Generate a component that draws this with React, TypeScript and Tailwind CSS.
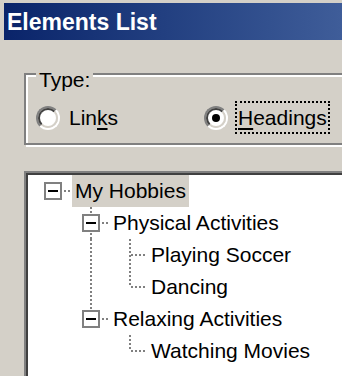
import React from "react";

// tree connector cell kinds
type Cell = "blank" | "pipe" | "tee" | "ell" | "boxRoot" | "boxTee" | "boxEll";

interface Row {
  cells: Cell[];
  label: string;
  selected?: boolean;
}

const rows: Row[] = [
  { cells: ["boxRoot"], label: "My Hobbies", selected: true },
  { cells: ["blank", "boxTee"], label: "Physical Activities" },
  { cells: ["blank", "pipe", "tee"], label: "Playing Soccer" },
  { cells: ["blank", "pipe", "ell"], label: "Dancing" },
  { cells: ["blank", "boxEll"], label: "Relaxing Activities" },
  { cells: ["blank", "blank", "ell"], label: "Watching Movies" },
];

const dots = { stroke: "#808080", strokeWidth: 2, strokeDasharray: "2 2" };

function Connector({ kind }: { kind: Cell }) {
  const hasBox = kind === "boxRoot" || kind === "boxTee" || kind === "boxEll";
  return (
    <svg width="38" height="32" className="shrink-0">
      {kind === "pipe" && <line x1="19" y1="0" x2="19" y2="32" {...dots} />}
      {kind === "tee" && (
        <>
          <line x1="20" y1="0" x2="20" y2="32" {...dots} />
          <line x1="21" y1="16" x2="37" y2="16" {...dots} />
        </>
      )}
      {kind === "ell" && (
        <>
          <line x1="20" y1="0" x2="20" y2="16" {...dots} />
          <line x1="21" y1="16" x2="37" y2="16" {...dots} />
        </>
      )}
      {(kind === "boxTee" || kind === "boxEll") && <line x1="19" y1="0" x2="19" y2="7" {...dots} />}
      {kind === "boxTee" && <line x1="19" y1="26" x2="19" y2="32" {...dots} />}
      {hasBox && (
        <>
          <line x1="30" y1="16" x2="38" y2="16" {...dots} />
          <rect x="11" y="8" width="16" height="16" fill="white" stroke="#808080" strokeWidth="2" />
          <rect x="14" y="15" width="10" height="2" fill="black" />
        </>
      )}
    </svg>
  );
}

function Radio({ checked }: { checked?: boolean }) {
  return (
    <span className="flex h-6 w-6 shrink-0 items-center justify-center rounded-full border-2 border-t-[#808080] border-l-[#808080] border-b-white border-r-white">
      <span className="flex h-5 w-5 items-center justify-center rounded-full border-2 border-t-[#404040] border-l-[#404040] border-b-[#d4d0c8] border-r-[#d4d0c8] bg-white">
        {checked && <span className="h-2 w-2 rounded-full bg-black" />}
      </span>
    </span>
  );
}

export default function App() {
  return (
    <div className="h-[376px] w-[342px] overflow-hidden bg-[#d4d0c8] pt-[3px] font-['Liberation_Sans',Arial,sans-serif] text-black">
      {/* caption bar */}
      <div className="ml-[4px] flex h-[37px] items-center bg-gradient-to-r from-[#0a246a] to-[#3f5d99] pl-[3px] pt-[2px] text-[23px] font-bold text-white">
        Elements List
      </div>

      {/* Type group */}
      <div className="relative ml-[24px] mt-[33px] h-[72px] w-[340px] border-2 border-[#808080] shadow-[inset_2px_2px_0_white,2px_2px_0_white]">
        <span className="absolute left-[10px] top-[-7px] bg-[#d4d0c8] px-[3px] text-[21px] leading-6">Type:</span>
        <div className="flex items-center pt-[26px]">
          <label className="ml-[10px] flex w-[168px] items-center gap-[9px] text-[21px] leading-6">
            <Radio />
            <span>
              Lin<u className="decoration-2 underline-offset-[3px]">k</u>s
            </span>
          </label>
          <label className="flex items-center gap-[7px] text-[21px] leading-6">
            <Radio checked />
            <span className="flex h-[33px] items-center border-2 border-dotted border-black px-px">
              <span>
                <u className="decoration-2 underline-offset-[3px]">H</u>eadings
              </span>
            </span>
          </label>
        </div>
      </div>

      {/* tree view */}
      <div className="ml-[24px] mt-[26px] h-[220px] w-[330px] border-l-2 border-t-2 border-[#808080]">
        <div className="h-full border-l-2 border-t-2 border-[#404040] bg-white pl-[6px]">
          {rows.map((row) => (
            <div key={row.label} className="flex h-8 items-center">
              {row.cells.map((c, i) => (
                <Connector key={i} kind={c} />
              ))}
              <span
                className={`h-8 whitespace-nowrap px-[3px] text-[21px] leading-8 ${row.selected ? "bg-[#d4d0c8]" : ""}`}
              >
                {row.label}
              </span>
            </div>
          ))}
        </div>
      </div>
    </div>
  );
}
